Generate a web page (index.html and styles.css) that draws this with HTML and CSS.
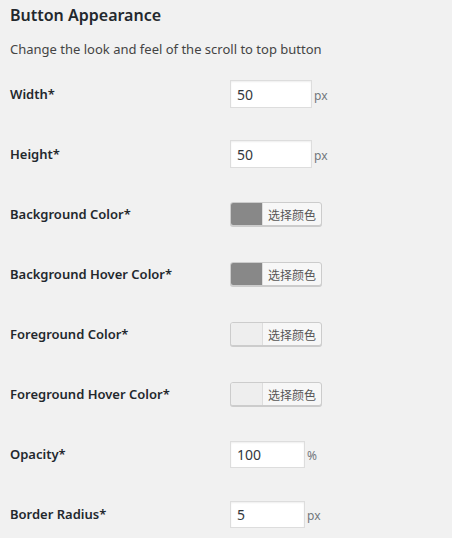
FILE: index.html
```html
<!DOCTYPE html>
<html lang="en">
<head>
    <meta charset="UTF-8">
    <meta name="viewport" content="width=device-width, initial-scale=1.0">
    <title>Button Appearance</title>
    <link rel="stylesheet" href="styles.css">
</head>
<body>
    <div class="wrap">
        <h2>Button Appearance</h2>
        <p class="description">Change the look and feel of the scroll to top button</p>

        <div class="form-table">
            <div class="row">
                <label>Width*</label>
                <div class="field">
                    <input type="text" class="num" value="50"><span class="unit">px</span>
                </div>
            </div>
            <div class="row">
                <label>Height*</label>
                <div class="field">
                    <input type="text" class="num" value="50"><span class="unit">px</span>
                </div>
            </div>
            <div class="row">
                <label>Background Color*</label>
                <div class="field">
                    <button class="color-picker"><span class="swatch dark"></span><span class="pick">选择颜色</span></button>
                </div>
            </div>
            <div class="row">
                <label>Background Hover Color*</label>
                <div class="field">
                    <button class="color-picker"><span class="swatch dark"></span><span class="pick">选择颜色</span></button>
                </div>
            </div>
            <div class="row">
                <label>Foreground Color*</label>
                <div class="field">
                    <button class="color-picker"><span class="swatch light"></span><span class="pick">选择颜色</span></button>
                </div>
            </div>
            <div class="row">
                <label>Foreground Hover Color*</label>
                <div class="field">
                    <button class="color-picker"><span class="swatch light"></span><span class="pick">选择颜色</span></button>
                </div>
            </div>
            <div class="row">
                <label>Opacity*</label>
                <div class="field">
                    <input type="text" class="num small" value="100"><span class="unit">%</span>
                </div>
            </div>
            <div class="row">
                <label>Border Radius*</label>
                <div class="field">
                    <input type="text" class="num small" value="5"><span class="unit">px</span>
                </div>
            </div>
        </div>
    </div>
</body>
</html>
```

FILE: styles.css
```css
body {
    margin: 0;
    background: #f1f1f1;
    color: #23282d;
    font-family: "Noto Sans", "Noto Sans CJK SC", sans-serif;
}

.wrap {
    padding: 0 10px;
}

h2 {
    font-size: 16px;
    font-weight: 600;
    line-height: 22px;
    margin: 4px 0 0;
}

.description {
    font-size: 13px;
    line-height: 18px;
    color: #444;
    margin: 14px 0 6px;
}

.row {
    display: flex;
    align-items: center;
    height: 60px;
}

.row label {
    width: 220px;
    font-size: 13px;
    font-weight: 600;
    color: #23282d;
}

.field {
    display: flex;
    align-items: center;
}

.num {
    box-sizing: border-box;
    width: 82px;
    height: 28px;
    border: 1px solid #ddd;
    box-shadow: inset 0 1px 2px rgba(0, 0, 0, 0.07);
    background: #fff;
    font-family: inherit;
    font-size: 14px;
    color: #32373c;
    padding: 0 6px;
    margin: 0;
}

.num.small {
    width: 75px;
    height: 27px;
}

.unit {
    font-size: 12px;
    color: #72777c;
    margin-left: 2px;
    padding-top: 3px;
}

.color-picker {
    display: flex;
    align-items: stretch;
    height: 24px;
    padding: 0;
    margin: 0;
    border: 1px solid #ccc;
    border-radius: 3px;
    box-shadow: 0 1px 0 #ccc;
    background: #f7f7f7;
    overflow: hidden;
    cursor: pointer;
}

.swatch {
    width: 31px;
    border-right: 1px solid #ddd;
}

.swatch.dark {
    background: #888;
}

.swatch.light {
    background: #eee;
}

.pick {
    display: flex;
    align-items: center;
    padding: 0 5px 0 5px;
    font-family: "Noto Sans CJK SC", sans-serif;
    font-size: 12px;
    color: #555;
}
```
